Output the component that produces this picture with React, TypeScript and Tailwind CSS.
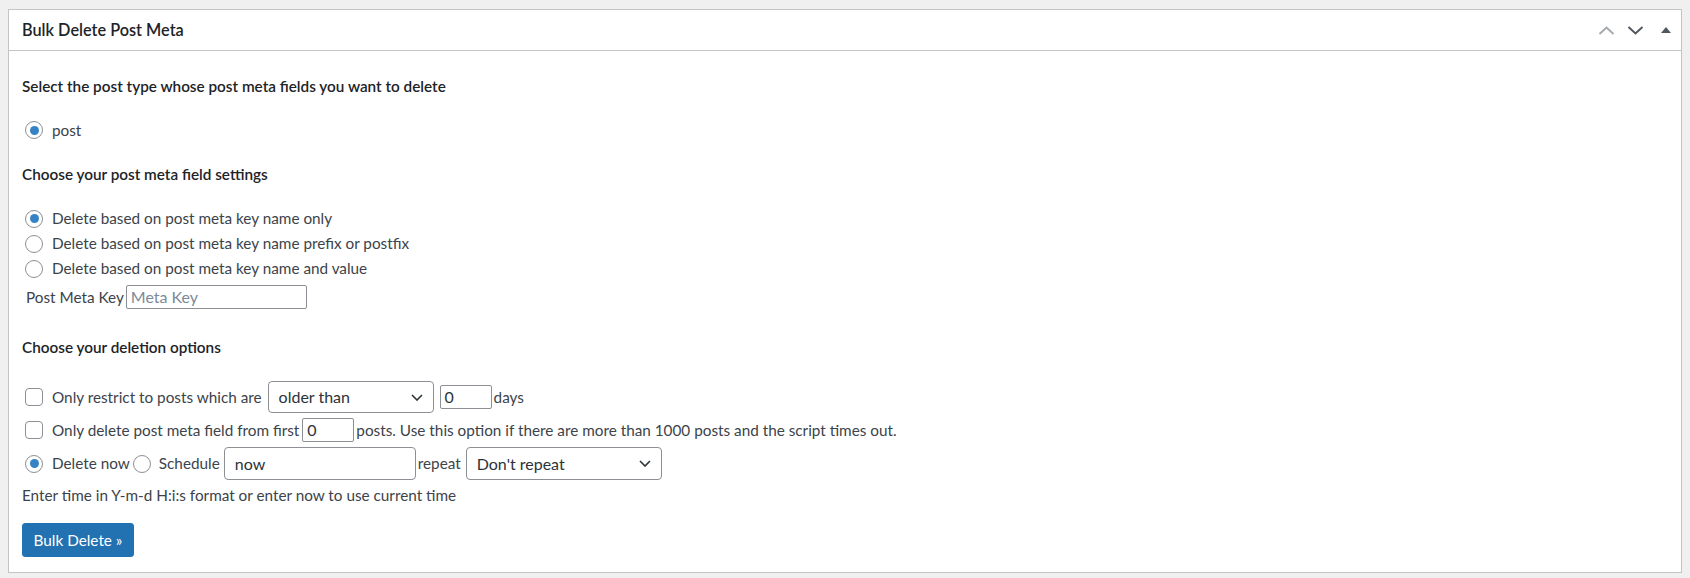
import { useState } from "react"

function Radio({ checked }: { checked?: boolean }) {
  return (
    <span className="flex h-[18px] w-[18px] shrink-0 items-center justify-center rounded-full border border-[#8c8f94] bg-white">
      {checked && <span className="h-[9px] w-[9px] rounded-full bg-[#3582c4]" />}
    </span>
  )
}

function Checkbox() {
  return <span className="h-[18px] w-[18px] shrink-0 rounded-[4px] border border-[#8c8f94] bg-white" />
}

function Chevron() {
  return (
    <svg width="12" height="7" viewBox="0 0 12 7">
      <polyline points="1,1 6,6 11,1" fill="none" stroke="#2c3338" strokeWidth="1.6" />
    </svg>
  )
}

function Select({ value, width }: { value: string; width: string }) {
  return (
    <div
      className={`${width} flex h-full items-center justify-between rounded-[4px] border border-[#8c8f94] bg-white pl-[10px] pr-[10px] text-[16px] text-[#2c3338]`}
    >
      <span>{value}</span>
      <Chevron />
    </div>
  )
}

export default function App() {
  const [metaKey, setMetaKey] = useState("")

  return (
    <div className="min-h-screen bg-[#f0f0f1] pl-[8px] pr-[8px] pt-[9px] font-['Lato',sans-serif]">
      <div className="w-[1674px] border border-[#c3c4c7] bg-white">
        {/* header */}
        <div className="flex h-[41px] items-center justify-between border-b border-[#c3c4c7] pl-[13px] pr-[10px]">
          <h2 className="text-[16.3px] font-semibold text-[#1d2327]">Bulk Delete Post Meta</h2>
          <div className="flex items-center">
            <svg width="17" height="9" viewBox="0 0 17 9">
              <polyline points="1.5,8 8.5,1.5 15.5,8" fill="none" stroke="#a7aaad" strokeWidth="2" />
            </svg>
            <svg width="17" height="9" viewBox="0 0 17 9" className="ml-[12px]">
              <polyline points="1.5,1 8.5,7.5 15.5,1" fill="none" stroke="#50575e" strokeWidth="2" />
            </svg>
            <svg width="10" height="6" viewBox="0 0 10 6" className="ml-[17px]">
              <polygon points="0,6 5,0 10,6" fill="#50575e" />
            </svg>
          </div>
        </div>

        {/* body */}
        <div className="pb-[15px] pl-[13px] text-[15.3px] text-[#3c434a]">
          <div className="mt-[25px] flex h-[20px] items-center font-semibold text-[#1d2327]">
            Select the post type whose post meta fields you want to delete
          </div>
          <label className="ml-[3px] mt-[24px] flex h-[20px] items-center gap-[9px]">
            <Radio checked />
            post
          </label>

          <div className="mt-[24px] flex h-[20px] items-center font-semibold text-[#1d2327]">
            Choose your post meta field settings
          </div>
          <div className="ml-[3px] mt-[22px] flex flex-col">
            <label className="flex h-[25px] items-center gap-[9px]">
              <Radio checked />
              Delete based on post meta key name only
            </label>
            <label className="flex h-[25px] items-center gap-[9px]">
              <Radio />
              Delete based on post meta key name prefix or postfix
            </label>
            <label className="flex h-[25px] items-center gap-[9px]">
              <Radio />
              Delete based on post meta key name and value
            </label>
          </div>
          <div className="ml-[4px] mt-[3px] flex h-[26px] items-center">
            <span>Post Meta Key</span>
            <input
              value={metaKey}
              onChange={(e) => setMetaKey(e.target.value)}
              placeholder="Meta Key"
              className="ml-[2px] h-[24px] w-[181px] rounded-[2px] border border-[#8c8f94] px-[4px] text-[16px] text-[#2c3338] placeholder:text-[#7b8a9a] outline-none"
            />
          </div>

          <div className="mt-[27px] flex h-[20px] items-center font-semibold text-[#1d2327]">
            Choose your deletion options
          </div>

          <div className="ml-[3px] mt-[24px] flex h-[32px] items-center">
            <Checkbox />
            <span className="ml-[9px]">Only restrict to posts which are</span>
            <div className="ml-[6px] h-[32px]">
              <Select value="older than" width="w-[166px]" />
            </div>
            <div className="ml-[6px] flex h-[24px] w-[52px] items-center rounded-[2px] border border-[#8c8f94] px-[4px] text-[16px] text-[#2c3338]">
              0
            </div>
            <span className="ml-[2px]">days</span>
          </div>

          <div className="ml-[3px] mt-[5px] flex h-[24px] items-center">
            <Checkbox />
            <span className="ml-[9px]">Only delete post meta field from first</span>
            <div className="ml-[3px] flex h-[24px] w-[52px] items-center rounded-[2px] border border-[#8c8f94] px-[4px] text-[16px] text-[#2c3338]">
              0
            </div>
            <span className="ml-[2px]">
              posts. Use this option if there are more than 1000 posts and the script times out.
            </span>
          </div>

          <div className="ml-[3px] mt-[5px] flex h-[33px] items-center">
            <Radio checked />
            <span className="ml-[9px]">Delete now</span>
            <span className="ml-[3px]">
              <Radio />
            </span>
            <span className="ml-[8px]">Schedule</span>
            <div className="ml-[4px] flex h-[33px] w-[192px] items-center rounded-[4px] border border-[#8c8f94] px-[10px] text-[16px] text-[#2c3338]">
              now
            </div>
            <span className="ml-[2px]">repeat</span>
            <div className="ml-[5px] h-[33px]">
              <Select value="Don't repeat" width="w-[196px]" />
            </div>
          </div>

          <div className="mt-[5px] flex h-[20px] items-center">
            Enter time in Y-m-d H:i:s format or enter now to use current time
          </div>

          <button className="mt-[18px] flex h-[34px] w-[112px] items-center justify-center rounded-[3px] border border-[#2271b1] bg-[#2271b1] text-[15.3px] text-white">
            Bulk Delete »
          </button>
        </div>
      </div>
    </div>
  )
}
